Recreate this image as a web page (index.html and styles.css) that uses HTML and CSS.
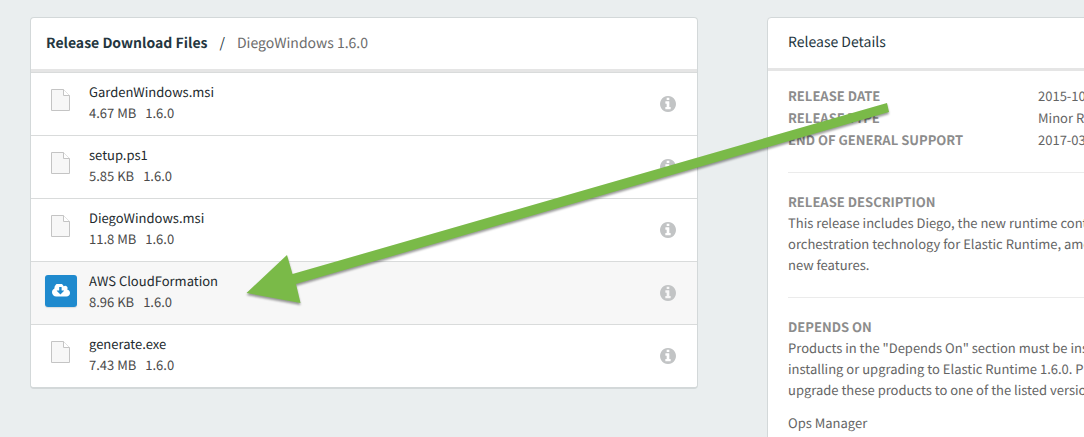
FILE: index.html
```html
<!DOCTYPE html>
<html lang="en">
<head>
<meta charset="utf-8">
<title>Release Download Files</title>
<link rel="stylesheet" href="styles.css">
</head>
<body>
<svg class="sprite" aria-hidden="true">
  <symbol id="file" viewBox="0 0 19 22">
    <path d="M.5.5h12l6 6v15H.5z" fill="#f7f7f7" stroke="#c4c4c4"/>
    <path d="M12.500.5v6h6" fill="#fff" stroke="#c4c4c4"/>
  </symbol>
  <symbol id="info" viewBox="128 128 1536 1536">
    <path fill="currentColor" d="M1152 1376v-160q0-14-9-23t-23-9h-96v-512q0-14-9-23t-23-9h-320q-14 0-23 9t-9 23v160q0 14 9 23t23 9h96v320h-96q-14 0-23 9t-9 23v160q0 14 9 23t23 9h448q14 0 23-9t9-23zm-128-896v-160q0-14-9-23t-23-9h-192q-14 0-23 9t-9 23v160q0 14 9 23t23 9h192q14 0 23-9t9-23zm640 416q0 209-103 385.500t-279.500 279.500-385.500 103-385.500-103-279.500-279.500-103-385.500 103-385.500 279.500-279.500 385.500-103 385.500 103 279.500 279.500 103 385.500z"/>
  </symbol>
</svg>
<main class="page">
  <section class="panel files">
    <h1 class="panel-header files-header"><strong>Release Download Files</strong><span class="slash">/</span><span class="crumb">DiegoWindows 1.6.0</span></h1>
    <ul class="file-list">
      <li class="file">
        <span class="file-icon"><svg class="icon-file" aria-hidden="true"><use href="#file"/></svg></span>
        <div class="file-text"><div class="file-name">GardenWindows.msi</div><div class="file-meta"><span>4.67 MB</span><span>1.6.0</span></div></div>
        <button class="info" aria-label="File information"><svg class="icon-info"><use href="#info"/></svg></button>
      </li>
      <li class="file">
        <span class="file-icon"><svg class="icon-file" aria-hidden="true"><use href="#file"/></svg></span>
        <div class="file-text"><div class="file-name">setup.ps1</div><div class="file-meta"><span>5.85 KB</span><span>1.6.0</span></div></div>
        <button class="info" aria-label="File information"><svg class="icon-info"><use href="#info"/></svg></button>
      </li>
      <li class="file">
        <span class="file-icon"><svg class="icon-file" aria-hidden="true"><use href="#file"/></svg></span>
        <div class="file-text"><div class="file-name">DiegoWindows.msi</div><div class="file-meta"><span>11.8 MB</span><span>1.6.0</span></div></div>
        <button class="info" aria-label="File information"><svg class="icon-info"><use href="#info"/></svg></button>
      </li>
      <li class="file file-active">
        <button class="download" aria-label="Download AWS CloudFormation"><svg class="icon-cloud" viewBox="-64 256 1920 1280"><path fill="#fff" d="M1216 928q0-14-9-23t-23-9h-224v-352q0-13-9.500-22.500t-22.500-9.500h-192q-13 0-22.500 9.500t-9.500 22.500v352h-224q-13 0-22.500 9.500t-9.500 22.500q0 14 9 23l352 352q9 9 23 9t23-9l351-351q10-12 10-24zm640 224q0 159-112.500 271.500t-271.500 112.500h-1088q-185 0-316.500-131.500t-131.500-316.500q0-130 70-240t188-165q-2-30-2-43 0-212 150-362t362-150q156 0 285.500 87t188.500 231q71-62 166-62 106 0 181 75t75 181q0 76-41 138 130 31 213.500 135.500t83.500 238.500z"/></svg></button>
        <div class="file-text"><div class="file-name">AWS CloudFormation</div><div class="file-meta"><span>8.96 KB</span><span>1.6.0</span></div></div>
        <button class="info" aria-label="File information"><svg class="icon-info"><use href="#info"/></svg></button>
      </li>
      <li class="file">
        <span class="file-icon"><svg class="icon-file" aria-hidden="true"><use href="#file"/></svg></span>
        <div class="file-text"><div class="file-name">generate.exe</div><div class="file-meta"><span>7.43 MB</span><span>1.6.0</span></div></div>
        <button class="info" aria-label="File information"><svg class="icon-info"><use href="#info"/></svg></button>
      </li>
    </ul>
  </section>
  <section class="panel details">
    <h2 class="panel-header details-header">Release Details</h2>
    <div class="details-body">
      <dl class="facts">
        <dt>RELEASE DATE</dt><dd>2015-10-26</dd>
        <dt>RELEASE TYPE</dt><dd>Minor Release</dd>
        <dt>END OF GENERAL SUPPORT</dt><dd>2017-03-31</dd>
      </dl>
      <section class="block">
        <h3 class="label">RELEASE DESCRIPTION</h3>
        <p class="copy">This release includes Diego, the new runtime container<br>orchestration technology for Elastic Runtime, among other<br>new features.</p>
      </section>
      <section class="block">
        <h3 class="label">DEPENDS ON</h3>
        <p class="copy">Products in the "Depends On" section must be installed before<br>installing or upgrading to Elastic Runtime 1.6.0. Please<br>upgrade these products to one of the listed versions.</p>
        <p class="copy product">Ops Manager</p>
      </section>
    </div>
  </section>
</main>
<svg class="arrow" width="660" height="220" viewBox="240 95 660 220" aria-hidden="true">
  <path d="M246.500 293 287 255l5.500 19L887 103l2 9-593 172 4.500 19z" fill="#7aba48"/>
</svg>
</body>
</html>
```
FILE: styles.css
```css
* {
  box-sizing: border-box;
  margin: 0;
  padding: 0;
}

body {
  height: 100vh;
  overflow: hidden;
  background: #eaeeef;
  color: #243640;
  font: 13px/21px "Noto Sans CJK SC", "Open Sans", sans-serif;
  text-rendering: geometricPrecision;
}

.sprite {
  position: absolute;
  width: 0;
  height: 0;
}

.page {
  display: grid;
  grid-template-columns: minmax(0, 668fr) minmax(0, 369fr);
  gap: 69px;
  align-items: start;
  margin: 17px -52px 0 30px;
}

.panel {
  border: 1px solid #d3d8d9;
  border-radius: 4px;
  background: #fff;
}

.files {
  border-bottom: 2px solid #d3d8d9;
}

.panel-header {
  border-bottom: 3px solid #e5e5e5;
  font-size: 14px;
  font-weight: 400;
  line-height: 24px;
}

.files-header {
  display: flex;
  gap: 12px;
  padding: 13px 15px 14px;
}

.files-header strong {
  font-weight: 700;
}

.crumb {
  color: #6c6c6c;
}

.details-header {
  padding: 12px 20px 14px;
}

.file-list {
  list-style: none;
}

.file {
  display: flex;
  align-items: flex-start;
  height: 63px;
  padding: 8px 21px 0 14px;
  border-top: 1px solid #d9dbdb;
}

.file-active {
  background: #f7f7f7;
}

.file-icon {
  width: 32px;
  padding: 8px 6px 0;
  line-height: 0;
}

.icon-file {
  width: 19px;
  height: 22px;
}

.file-text {
  flex: 1;
  margin-left: 12px;
}

.file-name {
  color: #22292d;
}

.file-meta {
  display: flex;
  gap: 9px;
  color: #4a4a4a;
}

.info {
  margin-top: 15px;
  border: 0;
  background: none;
  color: #c2c4c5;
  line-height: 0;
}

.icon-info {
  width: 16px;
  height: 16px;
}

.download {
  display: flex;
  align-items: center;
  justify-content: center;
  width: 32px;
  height: 32px;
  margin-top: 5px;
  padding-bottom: 2px;
  border: 0;
  border-radius: 3px;
  background: #1f8ace;
  box-shadow: 0 1px 1px #d8dcde;
}

.icon-cloud {
  width: 18px;
  height: 13px;
}

.details {
  min-height: 440px;
  overflow: hidden;
}

.details-body {
  padding: 14px 20px;
  color: #646464;
  white-space: nowrap;
}

.facts {
  display: grid;
  grid-template-columns: 250px 1fr;
  line-height: 22px;
  padding-bottom: 21px;
}

.facts dt,
.label {
  color: #8c8c8c;
  font-size: 13px;
  font-weight: 700;
}

.block {
  padding: 18px 0 22px;
  border-top: 1px solid #ebebeb;
}

.product {
  margin-top: 12px;
}

.arrow {
  position: absolute;
  top: 95px;
  left: 240px;
  pointer-events: none;
  filter: drop-shadow(0 2px 1px rgba(0, 0, 0, 0.4));
}
```
